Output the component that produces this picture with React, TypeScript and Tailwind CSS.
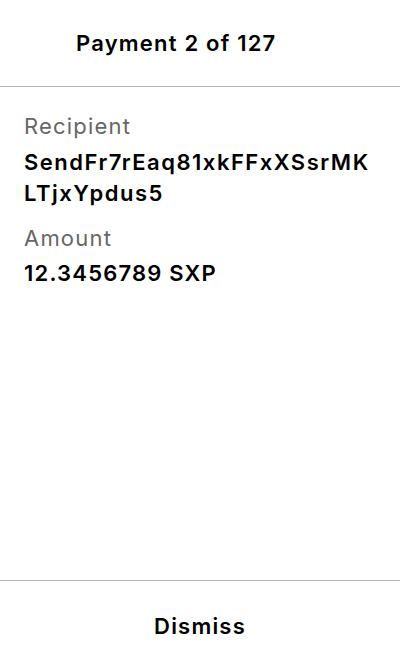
export default function App() {
  return (
    <div className="flex flex-col h-[672px] w-[400px] bg-white text-black tracking-[1.2px]" style={{ fontFamily: 'Inter, "Noto Sans", sans-serif' }}>
      <div className="h-[87px] flex items-center pl-[76px] border-b border-[#b3b3b3]">
        <h1 className="text-[22px] font-semibold leading-[31px]">Payment 2 of 127</h1>
      </div>
      <div className="flex-1 px-6 pt-[24px]">
        <div className="text-[22px] text-[#666666] leading-[31px]">Recipient</div>
        <div className="text-[22px] font-semibold leading-[31px] tracking-[1.5px] mt-[5px]">
          SendFr7rEaq81xkFFxXSsrMK
          <br />
          LTjxYpdus5
        </div>
        <div className="text-[22px] text-[#666666] leading-[31px] mt-[14px]">Amount</div>
        <div className="text-[22px] font-semibold leading-[31px] mt-[4px]">12.3456789 SXP</div>
      </div>
      <div className="h-[92px] flex items-center justify-center border-t border-[#b3b3b3]">
        <button className="text-[22px] font-semibold leading-[31px]">Dismiss</button>
      </div>
    </div>
  );
}
